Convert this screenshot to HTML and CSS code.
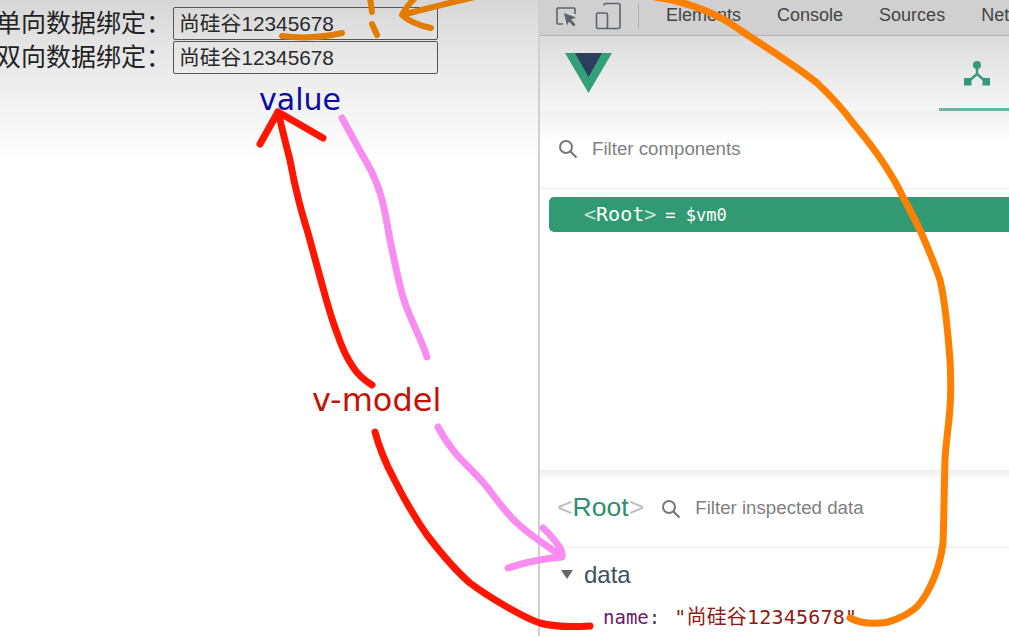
FILE: index.html
```html
<!DOCTYPE html>
<html lang="zh">
<head>
<meta charset="utf-8">
<title>v-model</title>
<link rel="stylesheet" href="styles.css">
</head>
<body>
<div class="stage">
  <main class="page">
    <div class="form">
      <div class="row"><span class="label">单向数据绑定：</span><span class="field">尚硅谷12345678</span></div>
      <div class="row"><span class="label">双向数据绑定：</span><span class="field">尚硅谷12345678</span></div>
    </div>
  </main>
  <aside class="devtools">
    <div class="tabs">
      <svg class="tool-icon" width="24" height="26" viewBox="0 0 24 26"><path d="M9 21H4a2 2 0 0 1-1-1V6a2 2 0 0 1 1-1h16a1.500 1.500 0 0 1 1 1v5" fill="none" stroke="#5f6368" stroke-width="1.600"/><path d="M10 10l12 4.500-5 2 4.500 5-2 2-4.500-5-2 4z" fill="#5f6368"/></svg>
      <svg class="tool-icon" width="26" height="28" viewBox="0 0 26 28"><path d="M9 3.500a2 2 0 0 1 2-2h12a2 2 0 0 1 2 2v21a2 2 0 0 1-2 2H11" fill="none" stroke="#5f6368" stroke-width="1.600"/><rect x="1.500" y="11" width="11" height="15.500" rx="1.500" fill="none" stroke="#5f6368" stroke-width="1.600"/></svg>
      <span class="tab-sep"></span>
      <span class="tab">Elements</span>
      <span class="tab">Console</span>
      <span class="tab">Sources</span>
      <span class="tab">Network</span>
    </div>
    <div class="vue-head">
      <svg class="vue-logo" width="47" height="40" viewBox="0 0 47 40"><path d="M0 0h47L23.500 40z" fill="#34a07a"/><path d="M10 0h27L23.500 24z" fill="#2c3e5c"/></svg>
      <div class="vue-tab">
        <svg width="28" height="28" viewBox="0 0 28 28"><circle cx="14" cy="5" r="4" fill="#34987a"/><path d="M14 7v7M14 14l-7 6M14 14l7 6" stroke="#34987a" stroke-width="2.400" fill="none"/><rect x="1" y="18" width="7.500" height="7.500" fill="#34987a"/><rect x="19.500" y="18" width="7.500" height="7.500" fill="#34987a"/></svg>
      </div>
    </div>
    <div class="search">
      <svg class="lens" width="20" height="20" viewBox="0 0 20 20"><circle cx="8" cy="8" r="6" fill="none" stroke="#777" stroke-width="2"/><path d="M12.500 12.500l6 6" stroke="#777" stroke-width="2.200"/></svg>
      <span>Filter components</span>
    </div>
    <div class="tree">
      <div class="node"><span class="br">&lt;</span>Root<span class="br">&gt;</span><span class="vm">= $vm0</span></div>
    </div>
    <div class="inspect-head">
      <span class="root-name"><span class="gr">&lt;</span>Root<span class="gr">&gt;</span></span>
      <svg class="lens" width="20" height="20" viewBox="0 0 20 20"><circle cx="8" cy="8" r="6" fill="none" stroke="#777" stroke-width="2"/><path d="M12.500 12.500l6 6" stroke="#777" stroke-width="2.200"/></svg>
      <span>Filter inspected data</span>
    </div>
    <div class="data">
      <div class="data-title"><span class="caret"></span>data</div>
      <div class="prop"><span class="key">name</span><span class="colon">:</span><span class="val">"尚硅谷12345678"</span></div>
    </div>
  </aside>
  <span class="note note-value">value</span>
  <span class="note note-model">v-model</span>
  <svg class="ink" width="1009" height="636" viewBox="0 0 1009 636">
    <g fill="none" stroke-linecap="round" stroke-linejoin="round">
      <g stroke="#e27b00" stroke-width="6">
        <path d="M282 36Q310 40 342 33"/>
        <path d="M370 -2L372 12M372 24L377 35"/>
        <path d="M475 -3Q440 5 402 15M414 -1Q406 7 402 15Q412 24 431 28"/>
      </g>
      <path stroke="#ff8000" stroke-width="7" d="M655 -3C690 2 720 15 740 30C770 50 795 65 817 83C830 95 842 108 853 123C870 143 890 170 903 197C910 210 915 220 920 230C928 248 935 265 940 280C946 305 948 335 950 360C951 380 951 395 950 407C949 425 946 440 945 460C944 490 944 520 943 543C941 560 936 575 930 587C925 597 920 605 913 610C905 616 890 623 880 623C870 624 858 622 850 618"/>
      <g stroke="#ff1500" stroke-width="7">
        <path d="M372 385C364 380 358 375 353 367C346 357 341 345 337 333C330 315 325 295 320 277C316 262 312 248 308 233C304 220 300 207 297 193C294 182 292 170 290 160C286 145 282 128 278 112"/>
        <path d="M260 144L278 112L323 138"/>
        <path d="M375 432C380 450 385 462 393 477C403 497 415 518 427 535C440 552 455 570 470 583C483 593 495 600 507 607C518 613 530 620 540 623C555 627 575 627 590 626"/>
      </g>
      <g stroke="#f98cf0" stroke-width="7">
        <path d="M342 118C350 132 358 148 367 163C372 172 377 183 380 193C385 208 387 225 390 240C394 258 398 280 403 297C409 318 420 335 427 357"/>
        <path d="M438 427C444 438 450 447 457 455C467 466 478 476 487 487C497 500 505 512 517 523C530 535 545 545 560 555"/>
        <path d="M543 528Q553 537 560 548Q563 553 562 557Q535 559 508 568"/>
      </g>
    </g>
  </svg>
</div>
</body>
</html>
```
FILE: styles.css
```css
* { box-sizing: border-box; }
html, body { margin: 0; height: 100%; overflow: hidden; background: #fff; }
.stage { position: relative; width: 1009px; height: 636px; display: flex; overflow: hidden; font-family: "Liberation Sans", "Noto Sans CJK SC", sans-serif; }
.page { width: 540px; flex: none; background: linear-gradient(#d6d6d6 0, #e6e6e6 50px, #fff 160px); border-right: 2px solid #d0d0d0; }
.form { display: flex; flex-direction: column; gap: 1px; padding-top: 7px; }
.row { display: flex; align-items: center; height: 33px; margin-left: -4px; }
.label { width: 177px; font-size: 25px; line-height: 35px; color: #222; white-space: nowrap; }
.field { width: 265px; height: 33px; border: 1.5px solid #555; border-radius: 2px; padding-left: 5px; font-size: 20.8px; line-height: 31px; color: #2a2a2a; white-space: nowrap; }
.devtools { flex: 1; display: flex; flex-direction: column; min-width: 0; }
.tabs { height: 36px; flex: none; display: flex; align-items: center; background: #d0d0d0; border-bottom: 1px solid #b4b4b4; padding: 0 0 4px 14px; white-space: nowrap; overflow: hidden; }
.tool-icon { flex: none; }
.tool-icon + .tool-icon { margin-left: 17px; }
.tab-sep { width: 1px; height: 26px; background: #b0b0b0; margin: 0 27px 0 17px; flex: none; }
.tab { font-size: 18px; color: #444; margin-right: 36px; }
.vue-head { height: 75px; flex: none; display: flex; justify-content: space-between; background: linear-gradient(#dcdcdc, #f6f6f6); padding-left: 25px; }
.vue-logo { margin-top: 17px; flex: none; }
.vue-tab { width: 70px; height: 75px; border-bottom: 3px solid #6fb3a0; padding: 24px 0 0 24px; flex: none; }
.vue-tab svg { display: block; }
.search { height: 78px; flex: none; display: flex; align-items: center; gap: 14px; padding: 0 0 2px 18px; font-size: 18.7px; color: #808080; border-bottom: 1px solid #eee; background: linear-gradient(#f0f0f0, #fff 30px); }
.tree { flex: 1; padding: 8px 0 0 9px; }
.node { height: 35px; border-radius: 5px 0 0 5px; background: #319a72; color: #fff; font-family: "DejaVu Sans Mono", monospace; font-size: 20px; line-height: 34px; padding-left: 35px; white-space: pre; }
.br { color: #c6e6d8; }
.vm { margin-left: 9px; font-size: 17px; }
.inspect-head { height: 78px; flex: none; display: flex; align-items: center; padding: 0 0 2px 17px; font-size: 18.7px; color: #808080; border-bottom: 1px solid #eee; background: linear-gradient(#efefef, #fff 10px); }
.inspect-head .lens { margin: 2px 14px 0 17px; }
.root-name { font-size: 26.6px; color: #2f8f6e; }
.gr { color: #bdbdbd; }
.data { height: 88px; flex: none; padding-left: 21px; }
.data-title { display: flex; align-items: center; height: 53px; font-size: 24px; color: #3e4f62; }
.caret { width: 0; height: 0; border-left: 6px solid transparent; border-right: 6px solid transparent; border-top: 9px solid #666; margin-right: 11px; }
.prop { padding-left: 42px; margin-top: 3px; font-family: "DejaVu Sans Mono", "Noto Sans CJK SC", monospace; font-size: 19px; line-height: 26px; white-space: nowrap; }
.key { color: #6a1b6e; }
.colon { color: #444; margin-right: 14px; }
.val { color: #8f1a12; font-size: 20px; letter-spacing: .2px; }
.note { position: absolute; white-space: nowrap; font-family: "DejaVu Sans", sans-serif; }
.note-value { left: 259px; top: 81px; font-size: 30px; line-height: 38px; color: #0a0aa8; }
.note-model { left: 312px; top: 381px; font-size: 32px; line-height: 38px; color: #c41208; }
.ink { position: absolute; left: 0; top: 0; pointer-events: none; }
```
